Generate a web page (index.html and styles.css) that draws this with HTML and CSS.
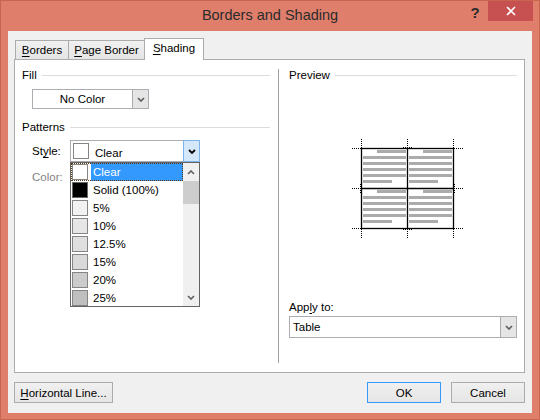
FILE: index.html
```html
<!DOCTYPE html>
<html>
<head>
<link rel="stylesheet" href="styles.css">
</head>
<body>
<div class="window">
  <div class="titlebar">
    <span></span>
    <div class="title">Borders and Shading</div>
    <div class="controls">
      <span class="help">?</span>
      <span class="close">
        <svg width="10" height="10" viewBox="0 0 10 10"><path d="M1 1L9 9M9 1L1 9" stroke="#fff" stroke-width="1.6"/></svg>
      </span>
    </div>
  </div>
  <div class="client">
    <div class="tabs">
      <div class="tab tab-borders"><u>B</u>orders</div>
      <div class="tab tab-page"><u>P</u>age Border</div>
      <div class="tab tab-shading active"><u>S</u>hading</div>
    </div>
    <div class="panel">
      <div class="col-left">
        <div class="group-title"><span>Fill</span><i></i></div>
        <div class="combo fill-combo">
          <span class="combo-text centered">No Color</span>
          <span class="drop-btn">
            <svg width="8" height="5" viewBox="0 0 8 5"><path d="M1 1L4 4L7 1" fill="none" stroke="#5f5f5f" stroke-width="1.7"/></svg>
          </span>
        </div>
        <div class="group-title patterns"><span>Patterns</span><i></i></div>
        <div class="field-row">
          <span class="field-label">St<u>y</u>le:</span>
          <div class="combo style-combo">
            <span class="swatch"></span>
            <span class="combo-text low">Clear</span>
            <span class="drop-btn hot">
              <svg width="8" height="5" viewBox="0 0 8 5"><path d="M1 1L4 4L7 1" fill="none" stroke="#000" stroke-width="1.8"/></svg>
            </span>
            <div class="listbox">
              <div class="options">
                <div class="opt sel"><span class="swatch"></span><span class="opt-label">Clear</span></div>
                <div class="opt"><span class="swatch sw-solid"></span><span class="opt-label">Solid (100%)</span></div>
                <div class="opt"><span class="swatch sw-5"></span><span class="opt-label">5%</span></div>
                <div class="opt"><span class="swatch sw-10"></span><span class="opt-label">10%</span></div>
                <div class="opt"><span class="swatch sw-12"></span><span class="opt-label">12.5%</span></div>
                <div class="opt"><span class="swatch sw-15"></span><span class="opt-label">15%</span></div>
                <div class="opt"><span class="swatch sw-20"></span><span class="opt-label">20%</span></div>
                <div class="opt"><span class="swatch sw-25"></span><span class="opt-label">25%</span></div>
              </div>
              <div class="scroll">
                <span class="arrow-btn">
                  <svg width="8" height="5" viewBox="0 0 8 5"><path d="M1 4L4 1L7 4" fill="none" stroke="#606060" stroke-width="1.6"/></svg>
                </span>
                <span class="thumb"></span>
                <span class="track"></span>
                <span class="arrow-btn">
                  <svg width="8" height="5" viewBox="0 0 8 5"><path d="M1 1L4 4L7 1" fill="none" stroke="#606060" stroke-width="1.6"/></svg>
                </span>
              </div>
            </div>
          </div>
        </div>
        <div class="field-row color-row"><span class="field-label disabled">Color:</span></div>
      </div>
      <div class="divider"></div>
      <div class="col-right">
        <div class="group-title"><span>Preview</span><i></i></div>
        <svg class="preview" width="130" height="105" viewBox="0 0 130 105">
          <defs>
            <g id="cell" fill="#ababab">
              <rect x="37" y="15" width="29" height="3"/>
              <rect x="23" y="21" width="43" height="3"/>
              <rect x="23" y="27" width="43" height="3"/>
              <rect x="23" y="33" width="43" height="3"/>
              <rect x="23" y="39" width="43" height="3"/>
              <rect x="23" y="45" width="29" height="3"/>
            </g>
          </defs>
          <use href="#cell"/>
          <use href="#cell" x="46"/>
          <use href="#cell" y="40"/>
          <use href="#cell" x="46" y="40"/>
          <g fill="none" stroke="#000" stroke-width="1.3">
            <rect x="21.5" y="13.5" width="92" height="80"/>
            <path d="M67.5 13.5V93.5M21.5 53.5H113.5"/>
          </g>
          <g fill="none" stroke="#000" stroke-dasharray="1 1">
            <path d="M12 13.5H21M114 13.5H123M12 53.5H21M114 53.5H123M12 93.5H21M114 93.5H123"/>
            <path d="M21.5 4V13M21.5 94V103M67.5 4V13M67.5 94V103M113.5 4V13M113.5 94V103"/>
            <path d="M63 12.5H72M63 94.5H72M20.5 49V58M114.5 49V58"/>
          </g>
        </svg>
        <div class="apply">
          <div class="apply-label">App<u>l</u>y to:</div>
          <div class="combo apply-combo">
            <span class="combo-text">Table</span>
            <span class="drop-btn">
              <svg width="8" height="5" viewBox="0 0 8 5"><path d="M1 1L4 4L7 1" fill="none" stroke="#5f5f5f" stroke-width="1.7"/></svg>
            </span>
          </div>
        </div>
      </div>
    </div>
    <div class="footer">
      <button class="btn wide"><u>H</u>orizontal Line...</button>
      <button class="btn default">OK</button>
      <button class="btn">Cancel</button>
    </div>
  </div>
</div>
</body>
</html>
```

FILE: styles.css
```css
body { margin: 0; font-family: "Liberation Sans", Arial, sans-serif; font-size: 11.5px; color: #000; }
u { text-decoration-thickness: 1px; text-underline-offset: 2px; }

.window { width: 540px; height: 420px; box-sizing: border-box; background: #e07e6c; border: 1px solid #c8644f; padding: 0 7px 6px; display: flex; flex-direction: column; }
.titlebar { height: 30px; margin: 0 -7px; display: grid; grid-template-columns: 1fr auto 1fr; }
.title { font-size: 14.5px; color: #2b2b2b; line-height: 29px; }
.controls { justify-self: end; display: flex; align-items: flex-start; margin-right: 6px; }
.help { width: 26px; height: 20px; font-size: 15px; font-weight: bold; color: #2b2b2b; text-align: center; line-height: 23px; }
.close { width: 45px; height: 20px; background: #c75050; display: flex; align-items: center; justify-content: center; }

.client { flex: 1; background: #f0f0f0; padding: 7px 7px 10px 6px; display: flex; flex-direction: column; }

.tabs { display: flex; align-items: flex-end; height: 21px; padding-left: 1px; position: relative; z-index: 1; }
.tab { height: 19px; box-sizing: border-box; border: 1px solid #acacac; border-bottom: none; background: linear-gradient(#f0f0f0, #e5e5e5); text-align: center; line-height: 18px; margin-right: -1px; white-space: nowrap; }
.tab-borders { width: 54px; }
.tab-page { width: 77px; }
.tab-shading { width: 60px; }
.tab.active { height: 22px; margin-bottom: -1px; background: #fff; line-height: 19px; }

.panel { flex: 1; background: #fff; border: 1px solid #acacac; display: flex; }
.col-left { width: 263px; box-sizing: border-box; padding: 7px 8px 0 7px; }
.divider { width: 1px; background: #a0a0a0; margin: 9px 0; }
.col-right { flex: 1; padding: 7px 7px 34px 10px; display: flex; flex-direction: column; }

.group-title { display: flex; align-items: center; gap: 5px; height: 16px; }
.group-title i { flex: 1; height: 1px; background: #dcdcdc; }
.patterns { margin-top: 10px; }

.combo { display: flex; box-sizing: border-box; border: 1px solid #abadb3; background: #fff; position: relative; }
.combo-text { flex: 1; line-height: 18px; padding-left: 3px; }
.combo-text.centered { text-align: center; padding: 0; }
.combo-text.low { padding-top: 3px; padding-left: 0; }
.drop-btn { width: 16px; box-sizing: border-box; border-left: 1px solid #acacac; background: #e5e5e5; display: flex; align-items: center; justify-content: center; }
.drop-btn.hot { width: 17px; border: 1px solid #7eb4ea; background: #d5e8fa; margin: -1px -1px -1px 0; }

.fill-combo { width: 117px; height: 20px; margin: 6px 0 0 10px; }

.field-row { display: flex; align-items: center; margin: 5px 0 0 10px; }
.field-label { width: 38px; }
.field-label.disabled { color: #838383; }
.color-row { margin-top: 8px; line-height: 14px; }

.style-combo { width: 130px; height: 22px; }
.style-combo > .swatch { margin: 2px 6px 0 2px; }

.swatch { width: 16px; height: 16px; box-sizing: border-box; border: 1px solid #858585; background: #fff; flex: none; }
.sw-solid { background: #000; border-color: #6a6a6a; }
.sw-5 { background: #f2f2f2; }
.sw-10 { background: #e6e6e6; }
.sw-12 { background: #dfdfdf; }
.sw-15 { background: #d9d9d9; }
.sw-20 { background: #cccccc; }
.sw-25 { background: #bfbfbf; }

.listbox { position: absolute; left: -1px; top: 21px; width: 130px; height: 145px; box-sizing: border-box; border: 1px solid #646464; background: #fff; display: flex; overflow: hidden; z-index: 2; }
.options { flex: 1; }
.opt { display: flex; align-items: center; height: 18px; font-size: 11.5px; }
.opt .swatch { margin: 0 3px 0 1px; }
.opt-label { flex: 1; height: 18px; line-height: 19px; padding-left: 2px; }
.opt.sel { outline: 1px dotted #5a3a10; outline-offset: -1px; }
.opt.sel .opt-label { background: #3399ff; color: #fff; }

.scroll { width: 16px; background: #f0f0f0; display: flex; flex-direction: column; }
.arrow-btn { height: 18px; display: flex; align-items: center; justify-content: center; }
.thumb { height: 23px; background: #cdcdcd; }
.track { flex: 1; }

.preview { display: block; margin: 52px 0 0 51px; }
.apply { margin-top: auto; }
.apply-label { line-height: 14px; margin-bottom: 2px; }
.apply-combo { height: 22px; }
.apply-combo .combo-text { line-height: 20px; }

.footer { display: flex; margin-top: 9px; }
.btn { height: 21px; box-sizing: border-box; border: 1px solid #acacac; background: linear-gradient(#f0f0f0, #e5e5e5); font-family: inherit; font-size: 11.5px; color: #000; padding: 0; width: 74px; }
.btn.wide { width: 99px; margin-right: auto; }
.btn.default { border-color: #3399ff; margin-right: 10px; }
```
